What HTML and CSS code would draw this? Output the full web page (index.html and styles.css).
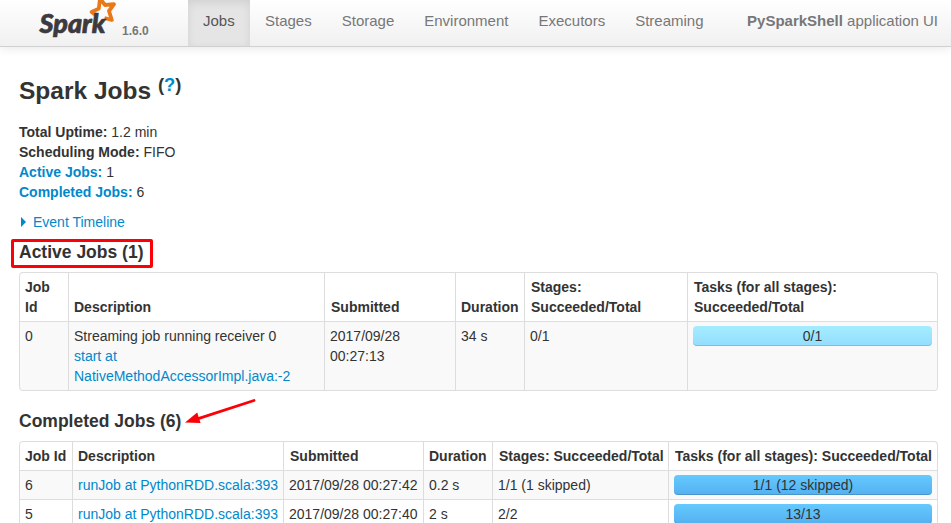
FILE: index.html
```html
<!DOCTYPE html>
<html lang="en">
<head>
<meta charset="utf-8">
<title>PySparkShell - Spark Jobs</title>
<link rel="stylesheet" href="styles.css">
</head>
<body>
<header class="navbar">
  <a class="brand" href="#">
    <svg class="logo" width="80" height="46" viewBox="0 0 80 46" aria-label="Spark">
      <path class="star" d="M58.5 15.6 53.6 12 60.8 8.6 62 -1.5 67 5 76 4.2 71 11 73.8 20 66.5 18"/>
      <text class="wordmark" x="1.5" y="33" textLength="66" lengthAdjust="spacingAndGlyphs">Spark</text>
    </svg>
    <span class="version">1.6.0</span>
  </a>
  <nav class="nav">
    <a class="tab active" href="#">Jobs</a>
    <a class="tab" href="#">Stages</a>
    <a class="tab" href="#">Storage</a>
    <a class="tab" href="#">Environment</a>
    <a class="tab" href="#">Executors</a>
    <a class="tab" href="#">Streaming</a>
  </nav>
  <p class="app-name"><strong>PySparkShell</strong> application UI</p>
</header>
<main>
  <h3>Spark Jobs <sup>(<a href="#">?</a>)</sup></h3>
  <ul class="summary">
    <li><strong>Total Uptime:</strong> 1.2 min</li>
    <li><strong>Scheduling Mode:</strong> FIFO</li>
    <li><a href="#active"><strong>Active Jobs:</strong></a> 1</li>
    <li><a href="#completed"><strong>Completed Jobs:</strong></a> 6</li>
  </ul>
  <a class="timeline" href="#"><span class="arrow"></span>Event Timeline</a>
  <h4 id="active" class="marked">Active Jobs (1)</h4>
  <table class="active-jobs">
    <colgroup><col class="a1"><col class="a2"><col class="a3"><col class="a4"><col class="a5"><col></colgroup>
    <thead>
      <tr><th>Job Id</th><th>Description</th><th class="nudged">Submitted</th><th>Duration</th><th class="nudged">Stages: Succeeded/Total</th><th class="nudged">Tasks (for all stages): Succeeded/Total</th></tr>
    </thead>
    <tbody>
      <tr><td>0</td><td>Streaming job running receiver 0<br><a href="#">start at NativeMethodAccessorImpl.java:-2</a></td><td>2017/09/28 00:27:13</td><td>34 s</td><td>0/1</td><td class="progress-cell"><div class="progress running">0/1</div></td></tr>
    </tbody>
  </table>
  <h4 id="completed" class="completed-title">Completed Jobs (6)
    <svg class="pointer" width="72" height="28" viewBox="0 0 72 28"><path class="shaft" d="M69 3.5 14 21.3"/><path class="head" d="M0 25.5 12.2 15.4 15.6 26Z"/></svg>
  </h4>
  <table class="completed-jobs">
    <colgroup><col class="c1"><col class="c2"><col class="c3"><col class="c4"><col class="c5"><col></colgroup>
    <thead>
      <tr><th>Job Id</th><th>Description</th><th class="nudged">Submitted</th><th>Duration</th><th class="nudged">Stages: Succeeded/Total</th><th class="nudged">Tasks (for all stages): Succeeded/Total</th></tr>
    </thead>
    <tbody>
      <tr><td>6</td><td><a href="#">runJob at PythonRDD.scala:393</a></td><td>2017/09/28 00:27:42</td><td>0.2 s</td><td>1/1 (1 skipped)</td><td class="progress-cell"><div class="progress">1/1 (12 skipped)</div></td></tr>
      <tr><td>5</td><td><a href="#">runJob at PythonRDD.scala:393</a></td><td>2017/09/28 00:27:40</td><td>2 s</td><td>2/2</td><td class="progress-cell"><div class="progress">13/13</div></td></tr>
    </tbody>
  </table>
</main>
</body>
</html>
```
FILE: styles.css
```css
* { box-sizing: border-box; }
html { overflow: hidden; }
body {
  margin: 0;
  height: 523px;
  overflow: hidden;
  background: #fff;
  color: #333;
  font: 14px/20px "Liberation Sans", Arial, sans-serif;
}
a { color: #0088cc; text-decoration: none; }

.navbar {
  display: flex;
  height: 47px;
  background: linear-gradient(#fff, #f0f0f0);
  border-bottom: 1px solid #d0d0d0;
  box-shadow: 0 1px 10px rgba(0, 0, 0, .1);
  font-size: 15px;
  color: #777;
}
.brand { display: flex; width: 188px; padding-left: 38px; }
.logo { flex: none; overflow: hidden; }
.wordmark {
  font: italic 900 27px Lato, "Liberation Sans", sans-serif;
  fill: #3c3a3e;
  stroke: #3c3a3e;
  stroke-width: .7;
  stroke-linejoin: round;
}
.star { fill: none; stroke: #e97818; stroke-width: 3.8; stroke-linejoin: round; }
.version { margin: 21px 0 0 4px; font-size: 12px; font-weight: bold; color: #777; }
.nav { display: flex; }
.tab { padding: 11px 15px 0; color: #777; }
.tab.active {
  width: 62px;
  background: #e5e5e5;
  color: #555;
  box-shadow: inset 0 3px 8px rgba(0, 0, 0, .09);
}
.app-name { margin: 11px 13px 0 auto; white-space: nowrap; }

main { padding: 24px 13px 0 19px; }
h3, h4 { margin: 0; font-weight: bold; }
h3 { height: 40px; font-size: 24.5px; line-height: 40px; }
sup { position: relative; top: -.45em; font-size: 18.4px; line-height: 0; vertical-align: baseline; }
.summary { margin: 11px 0 10px; padding: 0; list-style: none; }
.timeline { display: flex; align-items: center; }
.arrow {
  margin: 0 7px 0 2px;
  border: 5px solid transparent;
  border-left-color: #0088cc;
  border-right: 0;
}
h4 { font-size: 17.5px; line-height: 20px; }
.marked {
  width: 142px;
  height: 29px;
  margin: 7px 0 4px -8px;
  padding-left: 5px;
  border: 3px solid #fb0007;
  border-radius: 2px;
}
.completed-title { display: flex; height: 20px; margin: 20px 0 10px; }
.pointer { margin: -14px 0 0 4px; overflow: visible; }
.shaft { fill: none; stroke: #fb0007; stroke-width: 2.8; stroke-linecap: round; }
.head { fill: #fb0007; }

table {
  width: 919px;
  table-layout: fixed;
  border: 1px solid #ddd;
  border-left: 0;
  border-collapse: separate;
  border-spacing: 0;
  border-radius: 4px;
}
th, td {
  padding: 4px 5px;
  border-left: 1px solid #ddd;
  text-align: left;
  vertical-align: top;
}
th { vertical-align: bottom; white-space: nowrap; }
th.nudged { padding-left: 6px; padding-right: 4px; }
.active-jobs th { white-space: normal; }
td { border-top: 1px solid #ddd; }
th:first-child { border-top-left-radius: 4px; }
.active-jobs td:first-child { border-bottom-left-radius: 4px; }
tbody tr:nth-child(odd) td { background: #f9f9f9; }
.active-jobs td:last-child { border-bottom-right-radius: 4px; }
.a1 { width: 49px; }
.a2 { width: 256px; }
.a3 { width: 131px; }
.a4 { width: 69px; }
.a5 { width: 163px; }
.c1 { width: 53px; }
.c2 { width: 211px; }
.c3 { width: 140px; }
.c4 { width: 69px; }
.c5 { width: 176px; }
.progress {
  height: 20px;
  border-radius: 4px;
  background: linear-gradient(#64caff, #54b0f0);
  box-shadow: inset 0 -1px 0 rgba(0, 0, 0, .15);
  text-align: center;
}
.progress.running { background: linear-gradient(#a4edff, #94ddff); }
```
